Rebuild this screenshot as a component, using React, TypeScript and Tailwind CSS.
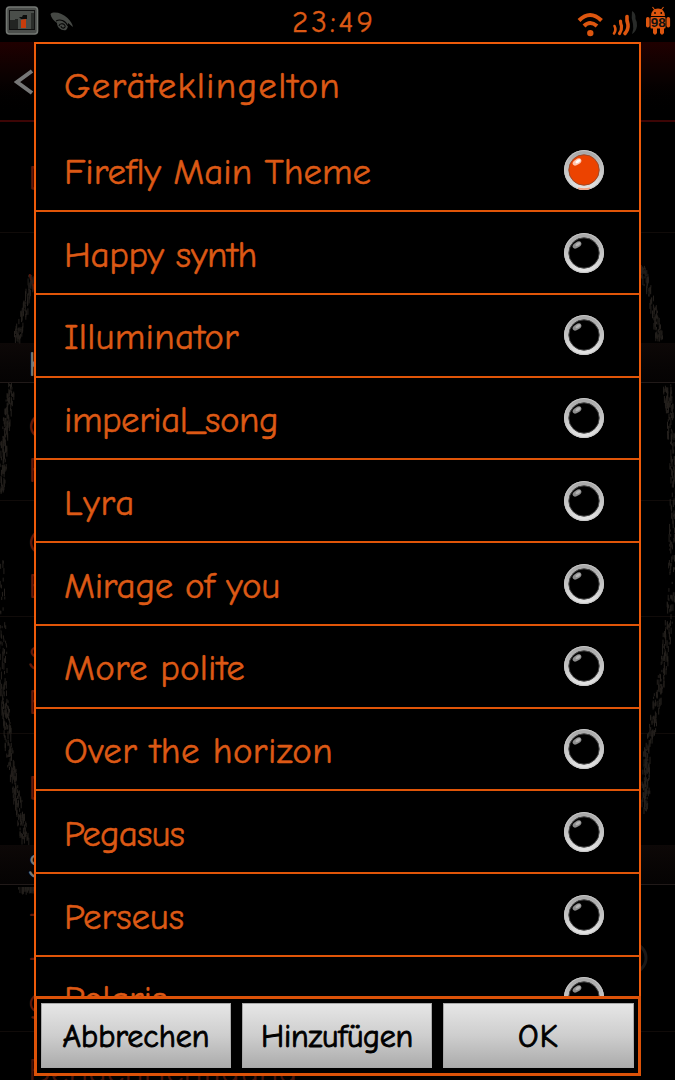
import { useLayoutEffect, useRef, useState } from "react";

type FitProps = { text: string; width: number; className?: string };

// Spreads a label's letters so that it fills the given width.
function FitText({ text, width, className = "" }: FitProps) {
  const ref = useRef<HTMLSpanElement>(null);
  const [spacing, setSpacing] = useState(0);
  useLayoutEffect(() => {
    const el = ref.current;
    if (!el) return;
    el.style.letterSpacing = "0px";
    const natural = el.getBoundingClientRect().width;
    const next = (width - natural) / text.length;
    el.style.letterSpacing = `${next}px`;
    setSpacing(next);
  }, [text, width]);
  return (
    <span ref={ref} className={`inline-block whitespace-nowrap ${className}`} style={{ letterSpacing: spacing }}>
      {text}
    </span>
  );
}

const ringtones = [
  { name: "Firefly Main Theme", width: 307 },
  { name: "Happy synth", width: 193 },
  { name: "Illuminator", width: 175 },
  { name: "imperial_song", width: 214 },
  { name: "Lyra", width: 71 },
  { name: "Mirage of you", width: 216 },
  { name: "More polite", width: 181 },
  { name: "Over the horizon", width: 269 },
  { name: "Pegasus", width: 120 },
  { name: "Perseus", width: 120 },
  { name: "Polaris", width: 103 },
];

function Radio({ checked }: { checked: boolean }) {
  return (
    <svg width="42" height="42" viewBox="0 0 42 42" className="shrink-0">
      <defs>
        <linearGradient id="ring" x1="0" y1="0" x2="0" y2="1">
          <stop offset="0" stopColor="#a5a5a5" />
          <stop offset="0.5" stopColor="#c4c4c4" />
          <stop offset="1" stopColor="#e6e6e6" />
        </linearGradient>
      </defs>
      <circle cx="21" cy="21" r="20" fill="url(#ring)" />
      <circle cx="21" cy="21" r="19.4" fill="none" stroke="#c8c8c8" strokeWidth="1" />
      <circle cx="21" cy="21" r="15.2" fill={checked ? "#ec4300" : "#000"} stroke={checked ? "#a04a28" : "#454545"} strokeWidth="1" />
      {checked && <path d="M15 39.3Q21 41 27 39.3" fill="none" stroke="#f0a080" strokeWidth="1.6" />}
      <ellipse cx="14" cy="13" rx="4.8" ry="2.8" transform="rotate(-32 14 13)" fill={checked ? "#ffc5ae" : "#8d8d8d"} />
      <ellipse cx="15" cy="12.2" rx="2.8" ry="1.4" transform="rotate(-32 15 12.2)" fill={checked ? "#fff" : "#b4b4b4"} />
    </svg>
  );
}

function StatusBar() {
  return (
    <div className="relative flex h-[42px] items-start justify-between bg-black">
      <div className="flex">
        <svg width="80" height="42" viewBox="0 0 80 42">
          <rect x="6.5" y="7" width="31" height="27" rx="3" fill="#4b4e4b" stroke="#747874" strokeWidth="1.6" />
          <rect x="9.5" y="10.5" width="25" height="19" fill="#4a4e4a" stroke="#111" strokeWidth="1" />
          <path d="M10 20h5v-1h3v10h-8z" fill="#222422" />
          <path d="M31 13h3v16h-3z" fill="#2a2d2a" />
          <path d="M21 28v-8l5-1v9z" fill="#c93c0c" />
          <path d="M19 17h3l1-2h4v4h-6z" fill="#0c0d0c" />
          <path d="M50.500 14c3-3 12-1 17 4 3 3 5 6 5.500 9-2-1-3-3-5-4 0 3 0 5-2 7-4 1-9-2-9-7-3-2-6-5-6.500-9z" fill="#454844" />
          <path d="M56 21c4-2 9-1 12 5M59 26c1-4 7-2 6 1-1 2-4 1-4-1" fill="none" stroke="#050505" strokeWidth="1.1" />
        </svg>
      </div>
      <div className="absolute top-[3px] left-[292px] text-[31px] leading-[38px] text-[#dc5915] [-webkit-text-stroke:0.4px_#dc5915]">
        <FitText text="23:49" width={84} />
      </div>
      <svg width="100" height="42" viewBox="0 0 100 42">
        <g fill="none" stroke="#dd560f" strokeWidth="4" strokeLinecap="butt">
          <path d="M4 20.500Q15 9.500 26.500 20.500" />
          <path d="M9 26Q15 20 22 26" />
        </g>
        <circle cx="15.3" cy="33.1" r="3.2" fill="#dd560f" />
        <g fill="none" stroke="#dd560f" strokeLinecap="round">
          <path d="M39.500 26q2 4-.5 7.500" strokeWidth="2.600" />
          <path d="M45.500 21q0 3 1 5 .5 4-2 7.500" strokeWidth="3.200" />
          <path d="M52 16.500q-.5 4 1 8 .5 5-3 9" strokeWidth="3.600" />
        </g>
        <path d="M57 11q4 2 3.500 8 2 3 1.500 7-1 6-5 8 2-5 1-10-2-6-1-13z" fill="#292b29" />
        <g fill="#dd560f">
          <path d="M76 16q.5-7.500 7-7.500t7 7.500z" />
          <path d="M77.500 7l3 4M88.500 7l-3 4" stroke="#dd560f" strokeWidth="1.100" />
          <rect x="75.500" y="17" width="15" height="11.500" rx="1" />
          <rect x="71" y="17" width="3.600" height="10.500" rx="1.700" />
          <rect x="91.500" y="17" width="3.600" height="10.500" rx="1.700" />
          <path d="M78 28h4v5q-2 3.500-4 0zM85 28h4v5q-2 3.500-4 0z" />
        </g>
        <circle cx="80" cy="13" r=".9" fill="#000" />
        <circle cx="86.300" cy="13" r=".9" fill="#000" />
        <text x="83.200" y="27" textAnchor="middle" fontSize="13.500" fontWeight="700" fontFamily="Liberation Sans, sans-serif" fill="#111">98</text>
      </svg>
    </div>
  );
}

// Short vertical ticks strewn along a band, as in brushed charcoal.
function strokes(points: number[][], count: number, spread: number, seed: number) {
  let s = seed;
  const rand = () => {
    s = (s * 16807) % 2147483647;
    return s / 2147483647;
  };
  let d = "";
  for (let i = 0; i < count; i++) {
    const t = rand() * (points.length - 1);
    const k = Math.floor(t);
    const f = t - k;
    const a = points[k];
    const b = points[k + 1];
    const x = a[0] + (b[0] - a[0]) * f + (rand() - 0.5) * spread;
    const y = a[1] + (b[1] - a[1]) * f;
    d += `M${x.toFixed(1)} ${y.toFixed(1)}v${(2 + rand() * 6).toFixed(1)}`;
  }
  return d;
}

const charcoal = [
  strokes([[32, 275], [24, 310], [16, 338]], 80, 7, 11),
  strokes([[12, 383], [5, 430], [1, 490]], 140, 7, 23),
  strokes([[0, 560], [4, 690], [9, 750], [18, 800], [25, 838]], 280, 8, 37),
  strokes([[642, 265], [652, 300], [660, 337]], 100, 7, 41),
  strokes([[667, 384], [671, 420], [674, 490], [672, 590], [664, 660], [654, 715], [646, 760], [646, 808]], 420, 8, 53),
  strokes([[20, 887], [34, 887]], 25, 3, 61),
];

function Letter({ children }: { children: string }) {
  return <div className="h-[44px] pl-[28px] text-[36px] leading-[44px]">{children}</div>;
}

function Backdrop() {
  return (
    <div className="flex h-[1038px] flex-col overflow-hidden text-[#5e1709]">
      <div className="flex h-20 shrink-0 items-center border-b-2 border-[#3d0505] bg-linear-to-b from-[#200000] via-[#080101] to-black pl-[14px]">
        <svg width="20" height="28" viewBox="0 0 20 28">
          <path d="M18 4L3 15 18 26" fill="none" stroke="#777" strokeWidth="4" />
        </svg>
      </div>
      <div className="h-[111px] shrink-0 border-b border-[#100b09] pt-[35px]"><Letter>D</Letter></div>
      <div className="h-[110px] shrink-0 pt-[32px]"><Letter>W</Letter></div>
      <div className="h-10 shrink-0 border-b border-[#211a19] bg-linear-to-b from-[#0d0807] to-[#050303] text-[#777]"><Letter>K</Letter></div>
      <div className="h-[118px] shrink-0 border-b border-[#100b09] pt-[22px]"><Letter>G</Letter><Letter>F</Letter></div>
      <div className="h-[116px] shrink-0 border-b border-[#100b09] pt-[20px]"><Letter>G</Letter><Letter>E</Letter></div>
      <div className="h-[117px] shrink-0 border-b border-[#100b09] pt-[20px]"><Letter>S</Letter><Letter>E</Letter></div>
      <div className="h-[111px] shrink-0 pt-[33px]"><Letter>D</Letter></div>
      <div className="h-10 shrink-0 border-b border-[#211a19] bg-linear-to-b from-[#0d0807] to-[#050303] text-[#777]"><Letter>S</Letter></div>
      <div className="h-[147px] shrink-0 border-b border-[#100b09] pt-[6px]"><Letter>-</Letter><Letter>-</Letter><Letter>g</Letter></div>
      <div className="shrink-0 pt-[18px] text-[#421108]"><Letter>Benachrichtigung</Letter></div>
    </div>
  );
}

const actions = [
  { name: "Abbrechen", width: 147 },
  { name: "Hinzufügen", width: 152 },
  { name: "OK", width: 41 },
];

export default function App() {
  return (
    <div className="relative h-[1080px] w-[675px] overflow-hidden bg-black font-['Comic_Sans_MS','Comic_Neue',Lato,sans-serif]">
      <StatusBar />
      <Backdrop />
      <svg width="675" height="1080" viewBox="0 0 675 1080" className="absolute inset-0">
        {charcoal.map((d, i) => (
          <path key={i} d={d} stroke="#24201d" strokeWidth="1" fill="none" />
        ))}
        <circle cx="631" cy="958" r="15" fill="none" stroke="#181818" strokeWidth="3" />
      </svg>
      <div className="absolute top-[42px] left-[34px] flex h-[1034px] w-[607px] flex-col bg-black text-[#dc5915]">
        <div className="flex h-[954px] flex-col overflow-hidden border-x-2 border-t-2 border-[#ee5b0a] [-webkit-text-stroke:0.5px_#dc5915]">
          <h1 className="h-[85.4px] shrink-0 pt-[17px] pl-[28px] text-[37px] leading-[50px]">
            <FitText text="Geräteklingelton" width={277} />
          </h1>
          {ringtones.map((tone, i) => (
            <div
              key={tone.name}
              className="flex h-[82.75px] shrink-0 items-center justify-between border-b-2 border-[#e05508] pr-[34px] pl-[28px] text-[37px] leading-[50px]"
            >
              <FitText text={tone.name} width={tone.width} className="pt-[4px]" />
              <Radio checked={i === 0} />
            </div>
          ))}
        </div>
        <div className="grid h-20 shrink-0 grid-cols-[190px_190px_191px] gap-[11px] border-[3px] border-[#dc5208] px-1 py-[4px]">
          {actions.map((action) => (
            <button
              key={action.name}
              className="flex h-[65px] items-center justify-center border border-[#a9a9a9] bg-linear-to-b from-[#e6e6e6] via-[#cecece] to-[#acacac] pt-[2px] text-[32px] text-black [-webkit-text-stroke:0.9px_black]"
            >
              <FitText text={action.name} width={action.width} />
            </button>
          ))}
        </div>
      </div>
    </div>
  );
}
